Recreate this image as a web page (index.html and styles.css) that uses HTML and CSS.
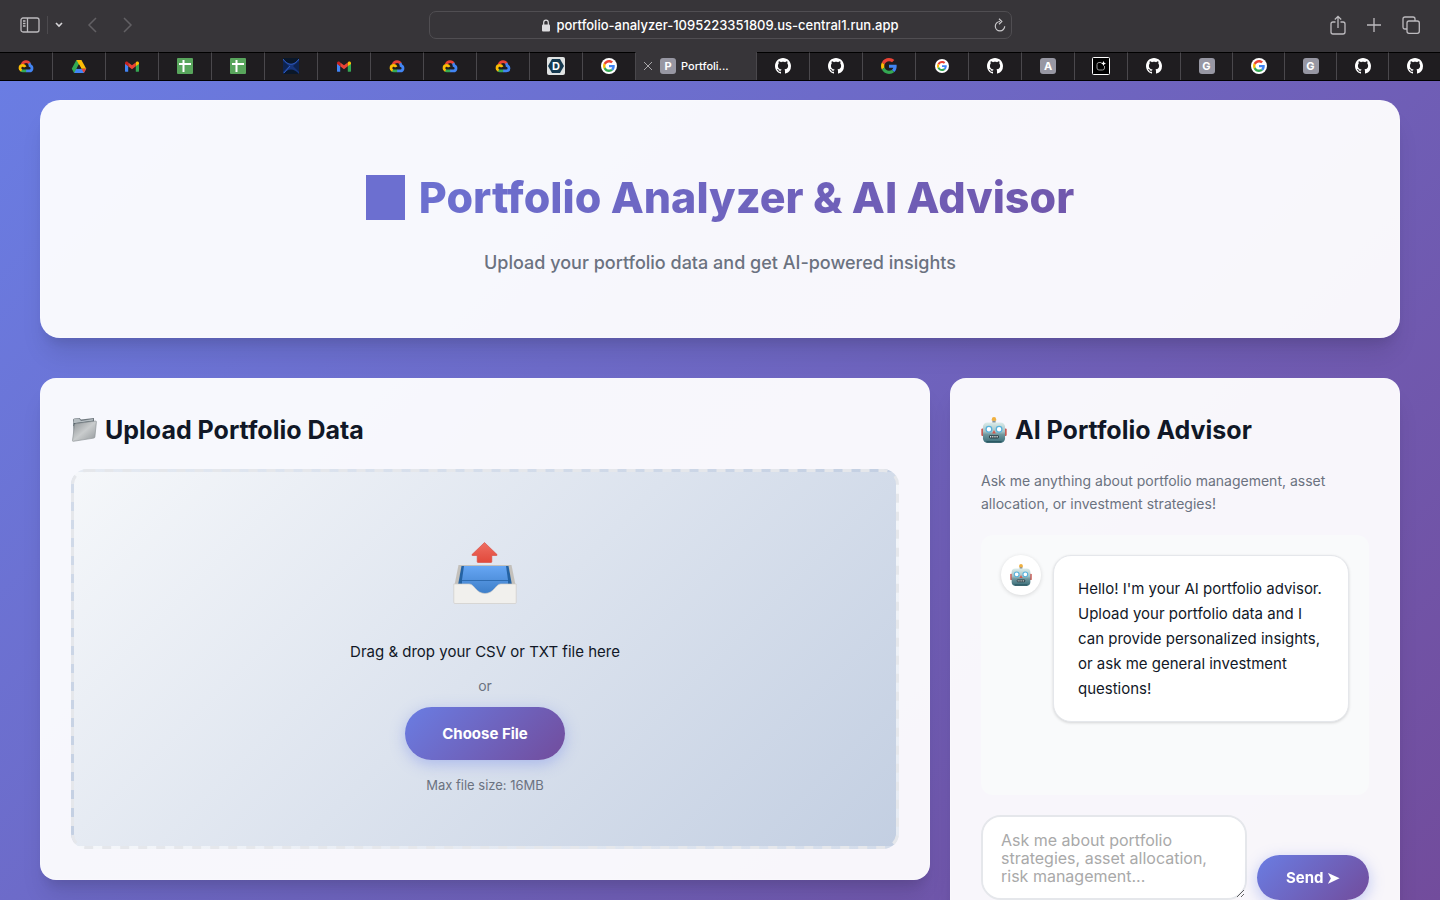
FILE: index.html
```
<!DOCTYPE html>
<html lang="en">
<head>
    <meta charset="UTF-8">
    <meta name="viewport" content="width=device-width, initial-scale=1.0">
    <title>Portfolio Analyzer &amp; AI Advisor</title>
    <link rel="stylesheet" href="styles.css">
</head>
<body>
    <!-- shared icons -->
    <svg class="defs" width="0" height="0" aria-hidden="true">
        <defs>
            <linearGradient id="steel" x1="0" y1="0" x2="1" y2="1">
                <stop offset="0" stop-color="#8d9295"/>
                <stop offset=".5" stop-color="#c9cccd"/>
                <stop offset="1" stop-color="#92979a"/>
            </linearGradient>
            <linearGradient id="face" x1="0" y1="0" x2="0" y2="1">
                <stop offset="0" stop-color="#dcecea"/>
                <stop offset=".45" stop-color="#a3c2c5"/>
                <stop offset=".6" stop-color="#6f979e"/>
                <stop offset="1" stop-color="#3a6d78"/>
            </linearGradient>
            <linearGradient id="tray" x1="0" y1="0" x2="0" y2="1">
                <stop offset="0" stop-color="#66a6f4"/>
                <stop offset="1" stop-color="#3b7cc6"/>
            </linearGradient>
            <linearGradient id="arrow" x1="0" y1="0" x2="0" y2="1">
                <stop offset="0" stop-color="#ee6e62"/>
                <stop offset="1" stop-color="#e2493b"/>
            </linearGradient>
        </defs>
        <symbol id="cloud" viewBox="0 0 18 16">
            <g fill="none" stroke-width="3.400">
                <path stroke="#ea4335" d="M4.200 5.600C5 3.300 6.700 2 9 2c2 0 3.600.9 4.300 2.600"/>
                <path stroke="#4285f4" d="M12.800 4c.8 1 1.100 1.900 1.200 2.900 1.500.5 2.400 1.700 2.400 3.100 0 1.900-1.400 3.400-3.400 3.400H9"/>
                <path stroke="#34a853" d="M9.200 13.400H5c-.8 0-1.400-.2-2-.6"/>
                <path stroke="#fbbc05" d="M3.600 13C2.300 12.400 1.600 11.300 1.600 10c0-1.900 1.400-3.300 3.300-3.300 1.400 0 2.600.8 3.100 2"/>
            </g>
        </symbol>
        <symbol id="drive" viewBox="0 0 87 78">
            <path fill="#4285f4" d="M17 52h70L73 78H14z"/>
            <path fill="#34a853" d="M28 0 0 52l14 26 44-78z"/>
            <path fill="#fbbc05" d="M28 0h30l29 52H58z"/>
            <path fill="#ea4335" d="M58 52h29L73 78z"/>
            <path fill="#1f1d20" d="M43.500 27 58 52H29z"/>
        </symbol>
        <symbol id="mail" viewBox="0 0 24 18">
            <path fill="#4285f4" d="M0 3v13.500Q0 18 1.500 18H5.500V8z"/>
            <path fill="#34a853" d="M24 3v13.500Q24 18 22.500 18H18.500V8z"/>
            <path fill="#ea4335" d="M5.500 2 12 7l6.500-5v6.500L12 13.500 5.500 8.500z"/>
            <path fill="#c5221f" d="M0 3C0 .4 2.800-.4 4.400.9L5.500 2v6.500L0 4.500z"/>
            <path fill="#fbbc04" d="M24 3c0-2.600-2.800-3.400-4.400-2.100L18.500 2v6.500L24 4.500z"/>
        </symbol>
        <symbol id="sheet" viewBox="0 0 16 16">
            <rect width="16" height="16" rx="1" fill="#58a55c"/>
            <path d="M2 6h12M6.500 2v12" stroke="#fff" stroke-width="2"/>
        </symbol>
        <symbol id="wave" viewBox="0 0 16 16">
            <path fill="#0a1729" d="M0 0h16v16H0z"/>
            <path fill="#17357c" d="M0 1c5 7 11 7 16 0v15c-5-6-11-6-16 0z"/>
            <path fill="#0d2350" d="M0 3v11l6-6zM16 3v11l-6-6z"/>
            <path d="M0 1c5 7 11 7 16 0M1 15l6-7" fill="none" stroke="#2f5cc4"/>
        </symbol>
        <symbol id="google" viewBox="0 0 48 48">
            <path fill="#ea4335" d="M24 9.500c3.540 0 6.710 1.220 9.210 3.600l6.850-6.850C35.900 2.380 30.470 0 24 0 14.620 0 6.510 5.380 2.560 13.220l7.980 6.190C12.430 13.720 17.740 9.500 24 9.500z"/>
            <path fill="#4285f4" d="M46.980 24.550c0-1.570-.15-3.090-.38-4.550H24v9.020h12.940c-.58 2.960-2.260 5.480-4.780 7.180l7.730 6c4.510-4.180 7.090-10.360 7.090-17.650z"/>
            <path fill="#fbbc05" d="M10.530 28.590c-.48-1.450-.76-2.990-.76-4.590s.27-3.140.76-4.590l-7.980-6.190C.92 16.460 0 20.120 0 24s.92 7.540 2.560 10.780z"/>
            <path fill="#34a853" d="M24 48c6.480 0 11.930-2.130 15.890-5.810l-7.730-6c-2.150 1.450-4.920 2.300-8.160 2.300-6.260 0-11.570-4.220-13.470-9.910l-7.980 6.190C6.510 42.620 14.620 48 24 48z"/>
        </symbol>
        <symbol id="github" viewBox="0 0 16 16">
            <path fill="#fff" d="M8 0C3.580 0 0 3.580 0 8c0 3.540 2.290 6.530 5.470 7.590.4.070.55-.17.55-.38 0-.19-.01-.82-.01-1.490-2.010.37-2.530-.49-2.690-.94-.09-.23-.48-.94-.82-1.130-.28-.15-.68-.52-.01-.53.63-.01 1.080.58 1.230.82.72 1.210 1.870.87 2.330.66.070-.52.280-.87.510-1.070-1.780-.2-3.640-.89-3.640-3.950 0-.87.310-1.590.820-2.150-.080-.2-.36-1.020.080-2.120 0 0 .67-.21 2.200.82.640-.18 1.320-.27 2-.27s1.360.090 2 .27c1.530-1.040 2.200-.82 2.200-.82.44 1.100.16 1.920.080 2.120.51.56.82 1.270.82 2.150 0 3.070-1.870 3.750-3.650 3.950.29.25.54.73.54 1.480 0 1.070-.01 1.930-.01 2.200 0 .21.15.46.55.38A8.010 8.010 0 0 0 16 8c0-4.420-3.580-8-8-8z"/>
        </symbol>
        <symbol id="spark" viewBox="0 0 18 18">
            <rect x=".5" y=".5" width="17" height="17" rx="1" fill="#000" stroke="#fff"/>
            <path d="M9.500 5.500H7Q5 5.500 5 7.500V11q0 2 2 2h3.500q2 0 2-2V9" fill="none" stroke="#999"/>
            <path fill="#fff" d="m11.500 4 .8 1.700 1.700.8-1.700.8-.8 1.700-.8-1.700L9 6.500l1.700-.8z"/>
        </symbol>
        <symbol id="robot" viewBox="0 0 24 24">
            <path fill="#86939a" d="M10.500 3h3v2.500h-3z"/>
            <path fill="#f0b040" d="M10 3.500V2q0-2 2-2t2 2v1.500z"/>
            <rect x=".3" y="10.500" width="2.500" height="7" rx="1" fill="#c95750"/>
            <rect x="21.200" y="10.500" width="2.500" height="7" rx="1" fill="#c95750"/>
            <rect x="1.800" y="5" width="20.400" height="18.700" rx="4" fill="url(#face)"/>
            <path d="M5 23h14" stroke="#24525c" stroke-width="1.300"/>
            <circle cx="7.300" cy="11.300" r="2.600" fill="#fff" stroke="#58b2dc" stroke-width="1.200"/>
            <circle cx="16.700" cy="11.300" r="2.600" fill="#fff" stroke="#58b2dc" stroke-width="1.200"/>
            <path fill="#d4574c" d="m12 12 1.700 3.300h-3.400z"/>
            <rect x="7.500" y="16.800" width="9" height="3" rx="1" fill="#2b3e45"/>
            <path d="M8.300 18.300h7.600" stroke="#d9dedf" stroke-width="1.400" stroke-dasharray="1.200 .8"/>
        </symbol>
    </svg>

    <header class="browser">
        <div class="toolbar">
            <div class="tools tools-left">
                <button type="button" aria-label="Sidebar">
                    <svg width="20" height="16" viewBox="0 0 20 16" fill="none" stroke="#bdbbbf" stroke-width="1.300"><rect x="1" y="1" width="18" height="14" rx="2"/><path d="M7.500 1v14M3 4h2.500M3 6.500h2.500M3 9h2.500"/></svg>
                </button>
                <span class="divider"></span>
                <button type="button" aria-label="Tab groups" class="caret">
                    <svg width="8" height="6" viewBox="0 0 8 6" fill="none" stroke="#d6d5d8" stroke-width="1.600"><path d="m1 1 3 3 3-3"/></svg>
                </button>
                <button type="button" aria-label="Back" class="back">
                    <svg width="10" height="16" viewBox="0 0 10 16" fill="none" stroke="#626064" stroke-width="1.500"><path d="M9 1 2 8l7 7"/></svg>
                </button>
                <button type="button" aria-label="Forward" class="forward">
                    <svg width="10" height="16" viewBox="0 0 10 16" fill="none" stroke="#626064" stroke-width="1.500"><path d="m1 1 7 7-7 7"/></svg>
                </button>
            </div>
            <div class="address">
                <svg width="10" height="13" viewBox="0 0 10 13"><rect x="1" y="5.500" width="8" height="7" rx="1" fill="#dedde0"/><path d="M2.700 6V3.500a2.300 2.300 0 0 1 4.600 0V6" fill="none" stroke="#dedde0" stroke-width="1.200"/></svg>
                <span>portfolio-analyzer-1095223351809.us-central1.run.app</span>
                <button type="button" aria-label="Reload" class="reload">
                    <svg width="12" height="14" viewBox="0 0 12 14" fill="none" stroke="#c9c8cb" stroke-width="1.200"><path d="M6 3.500a4.700 4.700 0 1 0 4.700 4.700M5 .8l2.800 2.700L5 6.200"/></svg>
                </button>
            </div>
            <div class="tools tools-right">
                <button type="button" aria-label="Share">
                    <svg width="16" height="20" viewBox="0 0 16 20" fill="none" stroke="#bdbbbf" stroke-width="1.300"><path d="M5.500 7H3Q1 7 1 9v8q0 2 2 2h10q2 0 2-2V9q0-2-2-2h-2.500M8 13V1.500M4.800 4.500 8 1.300l3.200 3.200"/></svg>
                </button>
                <button type="button" aria-label="New tab">
                    <svg width="14" height="14" viewBox="0 0 14 14" stroke="#bdbbbf" stroke-width="1.300"><path d="M7 0v14M0 7h14"/></svg>
                </button>
                <button type="button" aria-label="Tab overview">
                    <svg width="18" height="18" viewBox="0 0 18 18" fill="none" stroke="#bdbbbf" stroke-width="1.300"><rect x="5" y="5" width="12.300" height="12.300" rx="2"/><path d="M5 13H3q-2 0-2-2V3q0-2 2-2h8q2 0 2 2v2"/></svg>
                </button>
            </div>
        </div>
        <nav class="tabs">
            <a href="#"><svg class="small"><use href="#cloud"/></svg></a>
            <a href="#"><svg class="small"><use href="#drive"/></svg></a>
            <a href="#"><svg class="mail"><use href="#mail"/></svg></a>
            <a href="#"><svg><use href="#sheet"/></svg></a>
            <a href="#"><svg><use href="#sheet"/></svg></a>
            <a href="#"><svg><use href="#wave"/></svg></a>
            <a href="#"><svg class="mail"><use href="#mail"/></svg></a>
            <a href="#"><svg class="small"><use href="#cloud"/></svg></a>
            <a href="#"><svg class="small"><use href="#cloud"/></svg></a>
            <a href="#"><svg class="small"><use href="#cloud"/></svg></a>
            <a href="#"><span class="plate"><span class="hex">D</span></span></a>
            <a href="#"><span class="disc"><svg><use href="#google"/></svg></span></a>
            <a href="#" class="active">
                <svg class="close" viewBox="0 0 8 8" stroke="#a9a8ab"><path d="m0 0 8 8M8 0 0 8"/></svg>
                <span class="letter">P</span>
                <span>Portfoli...</span>
            </a>
            <a href="#"><svg><use href="#github"/></svg></a>
            <a href="#"><svg><use href="#github"/></svg></a>
            <a href="#"><svg><use href="#google"/></svg></a>
            <a href="#"><span class="disc disc-small"><svg><use href="#google"/></svg></span></a>
            <a href="#"><svg><use href="#github"/></svg></a>
            <a href="#"><span class="letter">A</span></a>
            <a href="#"><svg class="large"><use href="#spark"/></svg></a>
            <a href="#"><svg><use href="#github"/></svg></a>
            <a href="#"><span class="letter">G</span></a>
            <a href="#"><span class="disc"><svg><use href="#google"/></svg></span></a>
            <a href="#"><span class="letter">G</span></a>
            <a href="#"><svg><use href="#github"/></svg></a>
            <a href="#"><svg><use href="#github"/></svg></a>
        </nav>
    </header>

    <main class="page">
        <section class="card hero">
            <h1><span class="block"></span><span class="title">Portfolio Analyzer &amp; AI Advisor</span></h1>
            <p>Upload your portfolio data and get AI-powered insights</p>
        </section>

        <div class="columns">
            <section class="card">
                <h2>
                    <svg width="26" height="26" viewBox="0 0 26 26"><path fill="#70797f" d="M2 3q0-1.500 1.500-1.500l5-.5 1.500 1.500 13-1.500v4L3 22z"/><path fill="#b5bdc1" d="m3 2 5-.4L10 4l12-2v3L2 8z"/><path fill="#4b5860" d="M2.500 6.200 23 3.500v2L2.500 9z"/><path fill="url(#steel)" stroke="#91979a" stroke-width=".7" d="M3.600 7.800q.1-1 1.100-1.100L24.500 4q1-.1.900.9l-1.500 15q-.1 1-1.100 1.200L2.300 24.300q-.9.100-.8-.9z"/></svg>
                    Upload Portfolio Data
                </h2>
                <div class="upload-area">
                    <svg class="dashes"><rect x="1.500" y="1.500" rx="14"/></svg>
                    <svg class="upload-icon" width="64" height="64" viewBox="0 0 64 64">
                        <path fill="url(#arrow)" stroke="#d6473b" stroke-width=".6" d="M31.500 1.500 44 13.500q.5 1-.7 1H38.800v6.200q0 .8-.8.8H25q-.8 0-.8-.8v-6.200h-4.500q-1.200 0-.7-1z"/>
                        <path fill="#c3c0bb" d="M5.500 24h53L62.500 44h-61z"/>
                        <path fill="#2462a3" d="M8.500 25h47L59 44H5z"/>
                        <path fill="url(#tray)" d="M11 25h42l2 14v15H9V39z"/>
                        <path fill="#2e6bb0" d="M9 39h46v1H9z"/>
                        <path fill="#f1f0ed" stroke="#d0cdc8" stroke-width=".7" d="M.8 43h15.500c5 0 6.700 9.500 15.700 9.500S42.700 43 47.700 43h15.500v18.500q0 1-1 1H1.800q-1 0-1-1z"/>
                    </svg>
                    <p class="drag">Drag &amp; drop your CSV or TXT file here</p>
                    <p class="or">or</p>
                    <button type="button" class="btn choose">Choose File</button>
                    <p class="limit">Max file size: 16MB</p>
                </div>
            </section>

            <section class="card">
                <h2>
                    <svg width="26" height="26"><use href="#robot"/></svg>
                    AI Portfolio Advisor
                </h2>
                <p class="intro">Ask me anything about portfolio management, asset allocation, or investment strategies!</p>
                <div class="chat">
                    <div class="avatar"><svg width="22" height="22"><use href="#robot"/></svg></div>
                    <div class="message">Hello! I'm your AI portfolio advisor. Upload your portfolio data and I can provide personalized insights, or ask me general investment questions!</div>
                </div>
                <form class="ask">
                    <textarea aria-label="Question" placeholder="Ask me about portfolio strategies, asset allocation, risk management..."></textarea>
                    <button type="button" class="btn send">Send ➤</button>
                </form>
            </section>
        </div>
    </main>
</body>
</html>
```
FILE: styles.css
```
* {
    box-sizing: border-box;
    margin: 0;
    padding: 0;
}
body {
    font-family: Inter, "Liberation Sans", sans-serif;
    height: 100vh;
    display: flex;
    flex-direction: column;
    overflow: hidden;
    color: #111827;
}
button {
    font-family: inherit;
    border: none;
    background: none;
    cursor: pointer;
}
svg {
    display: block;
    flex: none;
}
.defs {
    position: absolute;
}

/* browser window */
.browser {
    flex: none;
    background: #373539;
    color: #fff;
}
.toolbar {
    height: 52px;
    padding: 0 20px 2px;
    display: grid;
    grid-template-columns: 1fr 583px 1fr;
    align-items: center;
}
.tools {
    display: flex;
    align-items: center;
}
.tools-right {
    justify-content: flex-end;
    gap: 21px;
}
.divider {
    width: 1px;
    height: 18px;
    margin: 0 7px;
    background: #4c4a4e;
}
.back {
    margin-left: 24px;
}
.forward {
    margin-left: 26px;
}
.address {
    height: 28px;
    border: 1px solid #504e52;
    border-radius: 7px;
    display: flex;
    align-items: center;
    justify-content: center;
    gap: 5px;
    font-size: 13px;
    font-weight: 500;
    position: relative;
}
.reload {
    position: absolute;
    right: 5px;
}
.tabs {
    height: 29px;
    display: flex;
    border-bottom: 1px solid #000;
}
.tabs a {
    flex: 0 1 53px;
    display: flex;
    align-items: center;
    justify-content: center;
    padding-bottom: 1px;
    background: #1f1d20;
    border-top: 1px solid #000;
    border-right: 1px solid #4a484c;
    color: #fff;
    text-decoration: none;
    font-size: 11px;
    font-weight: 500;
}
.tabs a:nth-child(n+22) {
    flex: 1 1 0;
}
.tabs a:last-child {
    border-right: none;
}
.tabs svg {
    width: 16px;
    height: 16px;
}
.tabs svg.small {
    width: 16px;
    height: 13px;
}
.tabs svg.mail {
    width: 14px;
    height: 11px;
}
.tabs svg.large {
    width: 18px;
    height: 18px;
}
.tabs .active {
    flex: 0 0 121px;
    justify-content: flex-start;
    gap: 5px;
    padding-left: 8px;
    background: #373539;
    border-top-color: #373539;
}
.tabs svg.close {
    width: 8px;
    height: 8px;
    margin-right: 3px;
}
.letter {
    width: 16px;
    height: 16px;
    border-radius: 3px;
    background: #9797a3;
    font-size: 11px;
    font-weight: 700;
    line-height: 17px;
    text-align: center;
}
.plate {
    width: 18px;
    height: 18px;
    border-radius: 2px;
    background: #dfe2e2;
    display: flex;
    align-items: center;
    justify-content: center;
}
.hex {
    width: 16px;
    height: 16px;
    background: #15394f;
    clip-path: polygon(25% 6%, 75% 6%, 100% 50%, 75% 94%, 25% 94%, 0 50%);
    font-size: 11px;
    font-weight: 700;
    line-height: 16px;
    text-align: center;
}
.disc {
    width: 16px;
    height: 16px;
    border-radius: 50%;
    background: #fff;
    display: flex;
    align-items: center;
    justify-content: center;
}
.disc svg {
    width: 12px;
    height: 12px;
}
.disc-small {
    width: 14px;
    height: 14px;
}
.disc-small svg {
    width: 10px;
    height: 10px;
}

/* page */
.page {
    flex: 1;
    min-height: 0;
    overflow: hidden;
    padding: 19px 40px;
    background: linear-gradient(135deg, #6a7de3 0%, #724c9c 100%);
}
.card {
    background: rgba(255, 255, 255, 0.95);
    border: 1px solid rgba(255, 255, 255, 0.2);
    border-radius: 16px;
    padding: 30px;
    box-shadow: 0 20px 25px -5px rgba(0, 0, 0, 0.1), 0 10px 10px -5px rgba(0, 0, 0, 0.08);
}
.hero {
    border-radius: 20px;
    padding: 60px 60px 58px;
    margin-bottom: 40px;
    text-align: center;
}
.hero h1 {
    display: flex;
    align-items: center;
    justify-content: center;
    gap: 14px;
    font-size: 43px;
    font-weight: 800;
    line-height: 72px;
    margin-bottom: 14px;
    background: linear-gradient(135deg, #6a7de3, #724c9c);
    -webkit-background-clip: text;
    background-clip: text;
    color: transparent;
}
.block {
    width: 39px;
    height: 45px;
    background: #6c6fd0;
}
.hero p {
    font-size: 18px;
    font-weight: 500;
    line-height: 32px;
    color: #6b7280;
}
.columns {
    display: grid;
    grid-template-columns: minmax(0, 1fr) 450px;
    gap: 20px;
    align-items: start;
}
h2 {
    display: flex;
    align-items: center;
    gap: 8px;
    font-size: 25px;
    font-weight: 700;
    line-height: 42px;
    margin-bottom: 18px;
}
.upload-area {
    position: relative;
    height: 380px;
    border: 3px solid transparent;
    border-radius: 16px;
    background: linear-gradient(135deg, #f5f7fa 0%, #c3cfe2 100%);
    padding-top: 69px;
    display: flex;
    flex-direction: column;
    align-items: center;
}
.dashes {
    position: absolute;
    top: -3px;
    left: -3px;
    width: calc(100% + 6px);
    height: calc(100% + 6px);
}
.dashes rect {
    width: calc(100% - 3px);
    height: calc(100% - 3px);
    fill: none;
    stroke: #e5e7eb;
    stroke-width: 3px;
    stroke-dasharray: 9px;
}
.drag {
    font-size: 15px;
    line-height: 26px;
    margin-top: 34px;
}
.or {
    font-size: 14px;
    line-height: 22px;
    margin: 10px 0;
    color: #6b7280;
}
.limit {
    font-size: 13px;
    line-height: 22px;
    margin-top: 14px;
    color: #6b7280;
}
.btn {
    border-radius: 50px;
    background: linear-gradient(135deg, #6a7de3 0%, #724c9c 100%);
    box-shadow: 0 4px 15px rgba(102, 126, 234, 0.4);
    color: #fff;
    font-size: 15px;
    font-weight: 700;
}
.choose {
    width: 160px;
    height: 53px;
}
.intro {
    font-size: 14px;
    line-height: 23px;
    color: #6b7280;
    margin-bottom: 20px;
}
.chat {
    height: 260px;
    padding: 20px;
    border-radius: 12px;
    background: #f9fafb;
    display: flex;
    align-items: flex-start;
    gap: 12px;
    margin-bottom: 20px;
}
.avatar {
    flex: none;
    width: 40px;
    height: 40px;
    border-radius: 50%;
    background: #fff;
    box-shadow: 0 1px 4px rgba(0, 0, 0, 0.14);
    display: flex;
    align-items: center;
    justify-content: center;
}
.message {
    flex: 1;
    padding: 20px 24px;
    border: 1px solid #e5e7eb;
    border-radius: 18px;
    background: #fff;
    box-shadow: 0 1px 3px rgba(0, 0, 0, 0.15);
    font-size: 15px;
    line-height: 25px;
}
.ask {
    display: flex;
    align-items: flex-end;
    gap: 10px;
}
.ask textarea {
    flex: 1;
    min-width: 0;
    height: 85px;
    padding: 14px 18px;
    border: 2px solid #e5e7eb;
    border-radius: 20px;
    background: #fff;
    font-family: inherit;
    font-size: 16px;
    line-height: 18px;
    resize: vertical;
}
.ask textarea::placeholder {
    color: #a9a9a9;
}
.send {
    width: 112px;
    height: 45px;
}
```
